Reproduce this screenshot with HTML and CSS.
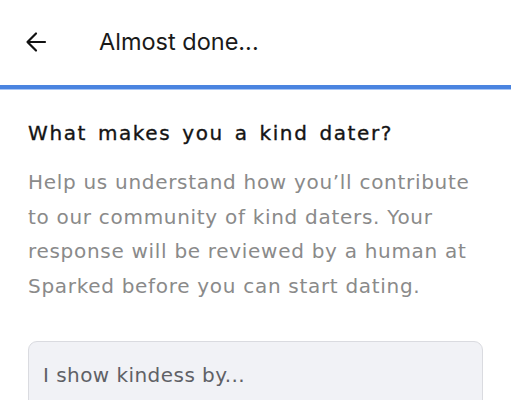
FILE: index.html
```html
<!DOCTYPE html>
<html>
<head>
<meta charset="utf-8">
<link rel="stylesheet" href="styles.css">
</head>
<body>
<header class="topbar">
  <button class="back" aria-label="Back">
    <svg width="24" height="24" viewBox="0 0 24 24" fill="none" stroke="#111" stroke-width="2.2" stroke-linecap="round" stroke-linejoin="round"><path d="M21 12H3.5M12 3.5L3.5 12L12 20.5"/></svg>
  </button>
  <h1 class="title">Almost done...</h1>
</header>
<div class="progress"></div>
<main class="content">
  <h2 class="question">What makes you a kind dater?</h2>
  <p class="help">Help us understand how you’ll contribute to our community of kind daters. Your response will be reviewed by a human at Sparked before you can start dating.</p>
  <div class="field">
    <span class="placeholder">I show kindess by...</span>
  </div>
</main>
</body>
</html>
```
FILE: styles.css
```css
* { box-sizing: border-box; }
html, body { margin: 0; padding: 0; background: #fff; }
body { font-family: "DejaVu Sans", "Liberation Sans", sans-serif; width: 511px; height: 400px; overflow: hidden; }
.topbar {
  height: 85px;
  display: flex;
  align-items: center;
  padding: 0 0 0 24px;
}
.back {
  border: 0; background: none; padding: 0; margin: 0;
  width: 24px; height: 24px; display: flex;
  margin-top: -1px;
}
.title {
  margin: -2px 0 0 51px;
  font-family: "Inter", "Liberation Sans", sans-serif;
  font-size: 23.5px;
  font-weight: 400;
  color: #1a1a1a;
}
.progress {
  height: 4px;
  background: #4a84e0;
  box-shadow: 0 1px 0 #a9c6f5;
}
.content { padding: 31px 28px 0 28px; }
.question {
  margin: 0;
  font-size: 20px;
  font-weight: 400;
  color: #141414;
  -webkit-text-stroke: 0.35px #141414;
  letter-spacing: 1.6px;
  word-spacing: 3px;
  line-height: 26px;
}
.help {
  margin: 19px 0 0 0;
  font-size: 20px;
  line-height: 34.5px;
  color: #8a8a8a;
  letter-spacing: 0.7px;
  width: 462px;
}
.field {
  margin-top: 38px;
  width: 455px;
  height: 80px;
  background: #f1f2f6;
  border: 1px solid #dadbe0;
  border-radius: 9px;
  padding: 21px 14px;
}
.placeholder {
  font-size: 20px;
  letter-spacing: 0.45px;
  color: #5f6166;
}
```
